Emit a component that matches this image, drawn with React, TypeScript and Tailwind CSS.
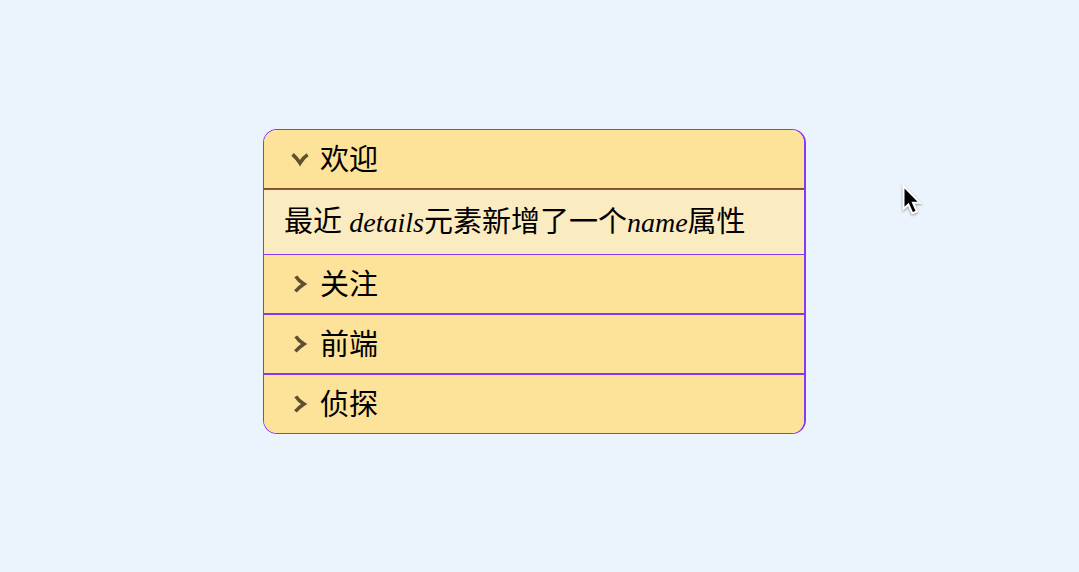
import type { ReactNode } from 'react';

interface Section {
  title: string;
  content?: ReactNode;
}

const SECTIONS: Section[] = [
  {
    title: '欢迎',
    content: (
      <>
        最近 <i className="text-[28px]">details</i>元素新增了一个<i className="text-[28px]">name</i>属性
      </>
    ),
  },
  { title: '关注' },
  { title: '前端' },
  { title: '侦探' },
];

function Chevron() {
  return (
    <svg
      viewBox="0 0 18 18"
      className="h-[18px] w-[18px] shrink-0 group-open:rotate-90"
      fill="none"
      stroke="#5f5030"
      strokeWidth="3.6"
      aria-hidden="true"
    >
      <path d="M4.8 1.4 Q7.4 5.6 13 9 Q8.4 12 4.4 16.4" />
    </svg>
  );
}

function AccordionItem({ title, content }: Section) {
  return (
    <details
      name="accordion"
      open={Boolean(content)}
      className="group border-b-2 border-[#8838f5] open:border-b last:border-b-0"
    >
      <summary className="flex h-[58px] cursor-pointer list-none items-center gap-[11px] bg-[#fde299] pl-[27px] group-open:h-[59px] group-open:border-b group-open:border-[#79502b] [&::-webkit-details-marker]:hidden">
        <Chevron />
        <span className="pt-0.5">{title}</span>
      </summary>
      {content && (
        <div className="flex min-h-[65px] items-center border-t border-[#8838f5] bg-[#fbebc1] px-5 pt-0.5">
          <p>{content}</p>
        </div>
      )}
    </details>
  );
}

function MousePointer() {
  return (
    <svg
      viewBox="0 0 22 32"
      className="pointer-events-none absolute top-[184px] left-[901px] h-8 w-[22px] drop-shadow-[0_1px_1px_rgba(0,0,0,0.4)]"
      aria-hidden="true"
    >
      <path
        d="M2.5 2 V25 L7.4 20.5 L11.4 29.4 L15.8 27.3 L12 18.7 H19 Z"
        fill="#000"
        stroke="#fff"
        strokeWidth="2"
      />
    </svg>
  );
}

function App() {
  return (
    <main className="relative flex min-h-screen items-center justify-center bg-[#ebf4fc] pr-[10px] pb-[10px] font-['Liberation_Serif','Noto_Sans_CJK_SC',serif] text-[29px] leading-10 text-black">
      <div className="w-[543px] max-w-full overflow-hidden rounded-[14px] border border-r-2 border-[#8838f5]">
        {SECTIONS.map((section) => (
          <AccordionItem key={section.title} {...section} />
        ))}
      </div>
      <MousePointer />
    </main>
  );
}

export default App;
